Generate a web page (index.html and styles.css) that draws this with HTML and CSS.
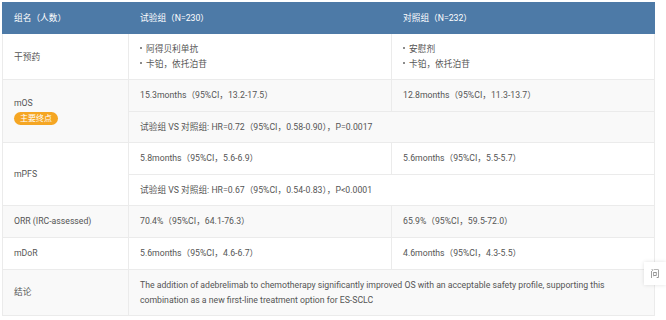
FILE: index.html
```html
<!DOCTYPE html>
<html lang="zh">
<head>
<meta charset="utf-8">
<link rel="stylesheet" href="styles.css">
</head>
<body>
<div class="wrap">
<table class="tbl">
  <colgroup>
    <col class="c1"><col class="c2"><col class="c3">
  </colgroup>
  <thead>
    <tr><th>组名（人数）</th><th>试验组（N=230）</th><th>对照组（N=232）</th></tr>
  </thead>
  <tbody>
    <tr class="w">
      <td class="tall">干预药</td>
      <td class="tall"><ul class="list"><li>阿得贝利单抗</li><li>卡铂，依托泊苷</li></ul></td>
      <td class="tall"><ul class="list"><li>安慰剂</li><li>卡铂，依托泊苷</li></ul></td>
    </tr>
    <tr class="g">
      <td rowspan="2"><div class="lab">mOS</div><span class="badge">主要终点</span></td>
      <td>15.3months（95%CI，13.2-17.5）</td>
      <td>12.8months（95%CI，11.3-13.7）</td>
    </tr>
    <tr class="g">
      <td colspan="2">试验组 VS 对照组: HR=0.72（95%CI，0.58-0.90），P=0.0017</td>
    </tr>
    <tr class="w">
      <td rowspan="2">mPFS</td>
      <td>5.8months（95%CI，5.6-6.9）</td>
      <td>5.6months（95%CI，5.5-5.7）</td>
    </tr>
    <tr class="w">
      <td colspan="2">试验组 VS 对照组: HR=0.67（95%CI，0.54-0.83），P&lt;0.0001</td>
    </tr>
    <tr class="g">
      <td>ORR (IRC-assessed)</td>
      <td>70.4%（95%CI，64.1-76.3）</td>
      <td>65.9%（95%CI，59.5-72.0）</td>
    </tr>
    <tr class="w">
      <td>mDoR</td>
      <td>5.6months（95%CI，4.6-6.7）</td>
      <td>4.6months（95%CI，4.3-5.5）</td>
    </tr>
    <tr class="g">
      <td class="tall">结论</td>
      <td class="tall" colspan="2">The addition of adebrelimab to chemotherapy significantly improved OS with an acceptable safety profile, supporting this combination as a new first-line treatment option for ES-SCLC</td>
    </tr>
  </tbody>
</table>
</div>
<div class="ask">问</div>
</body>
</html>
```
FILE: styles.css
```css
html, body {
  margin: 0;
  padding: 0;
  background: #ffffff;
}
body {
  font-family: Roboto, "Noto Sans CJK SC", sans-serif;
  font-size: 8.7px;
  color: #555555;
}
.wrap {
  padding: 2px 12px 0 2px;
}
.tbl {
  width: 652px;
  border-collapse: collapse;
  table-layout: fixed;
}
.c1 { width: 126px; }
.c2 { width: 263px; }
.c3 { width: 263px; }
.tbl th {
  background: #4d7aa7;
  color: #ffffff;
  font-weight: 400;
  text-align: left;
  padding: 8px 11px 7px;
  line-height: 15px;
  border: 1px solid #4d7aa7;
  border-left: 1px solid #7396bd;
}
.tbl th:first-child {
  border-left-color: #4d7aa7;
}
.tbl td {
  padding: 8px 11px 7.6px;
  line-height: 15px;
  border: 1px solid #ebebeb;
  vertical-align: middle;
}
.tbl td.tall {
  padding-bottom: 7px;
}
.tbl tr.g td { background: #f9f9f9; }
.tbl tr.w td { background: #ffffff; }
.list {
  list-style: none;
  margin: 0;
  padding: 0;
}
.list li {
  position: relative;
  padding-left: 6px;
}
.list li::before {
  content: "";
  position: absolute;
  left: 0;
  top: 5px;
  width: 2px;
  height: 2px;
  border-radius: 1px;
  background: #666666;
}
.lab {
  line-height: 15px;
}
.badge {
  display: inline-block;
  background: #f5a623;
  color: #ffffff;
  font-size: 8px;
  line-height: 13px;
  padding: 0 6px;
  border-radius: 7px;
  margin-top: 1px;
}
.ask {
  position: fixed;
  right: 0;
  top: 262px;
  width: 22px;
  height: 23px;
  background: #ffffff;
  box-shadow: 0 0 4px rgba(0,0,0,0.12);
  color: #777777;
  font-size: 9px;
  display: flex;
  align-items: center;
  justify-content: center;
}
```
